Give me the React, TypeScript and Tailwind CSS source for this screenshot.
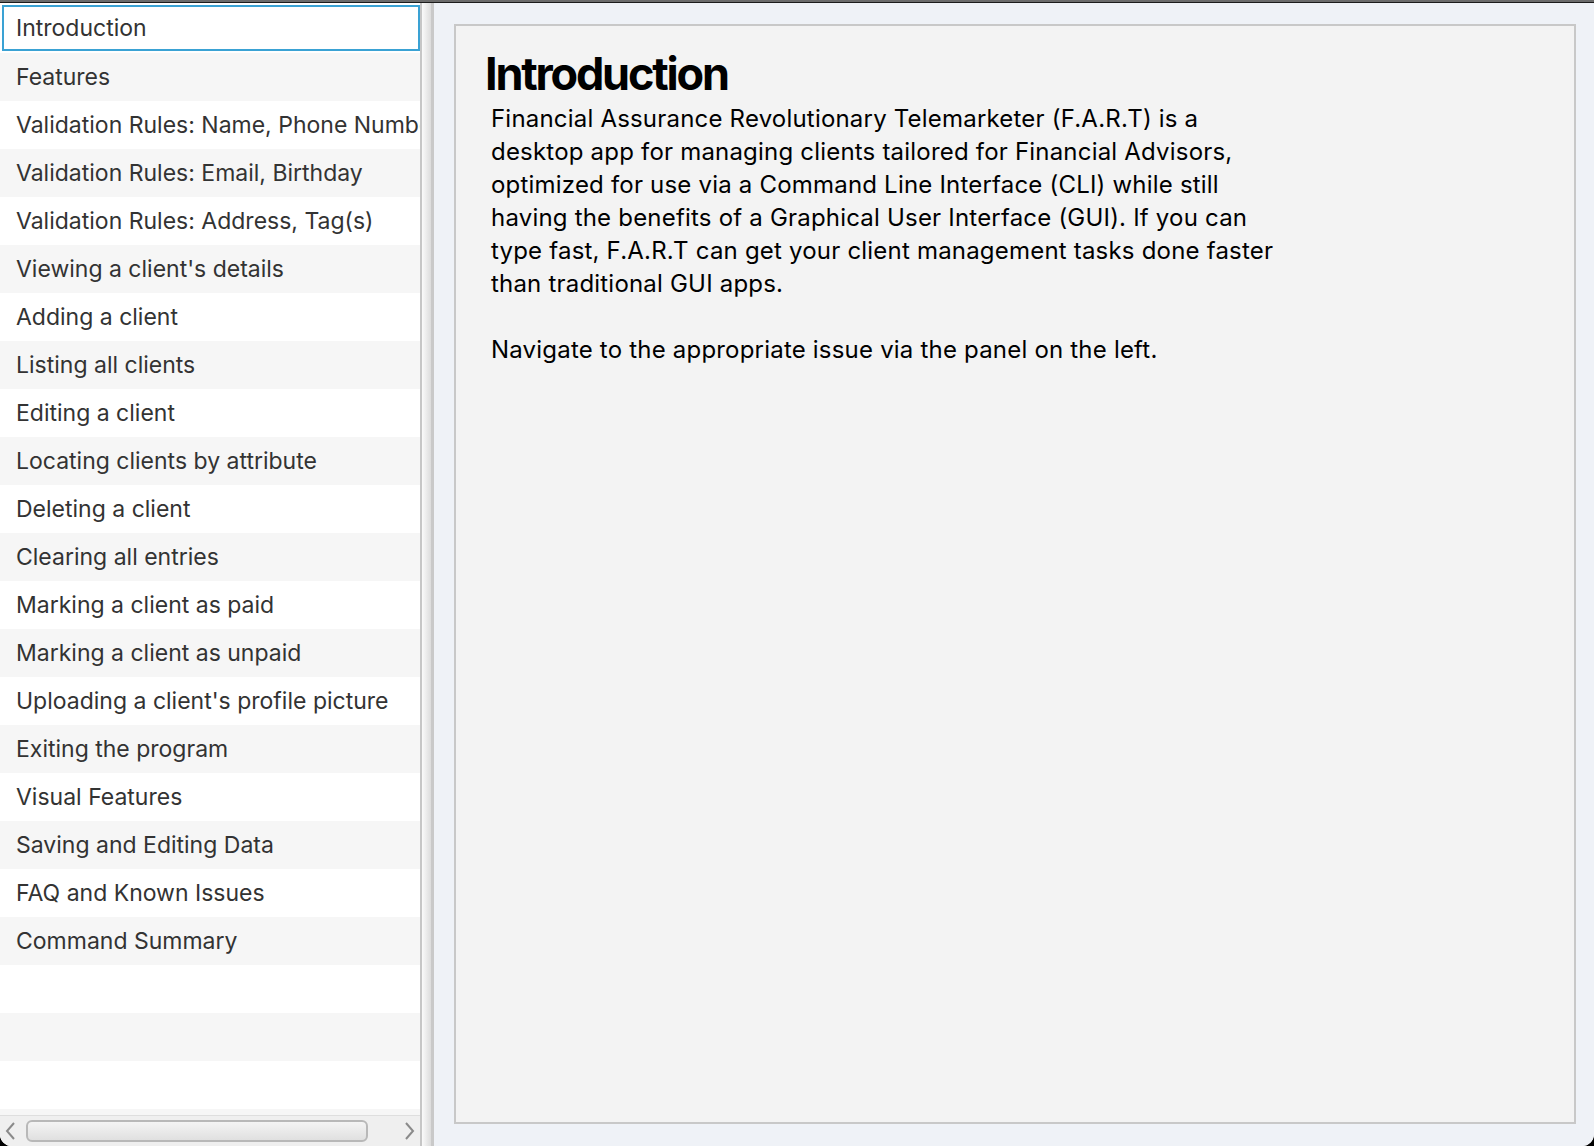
import React from 'react'

const topics = [
  "Introduction",
  "Features",
  "Validation Rules: Name, Phone Number",
  "Validation Rules: Email, Birthday",
  "Validation Rules: Address, Tag(s)",
  "Viewing a client's details",
  "Adding a client",
  "Listing all clients",
  "Editing a client",
  "Locating clients by attribute",
  "Deleting a client",
  "Clearing all entries",
  "Marking a client as paid",
  "Marking a client as unpaid",
  "Uploading a client's profile picture",
  "Exiting the program",
  "Visual Features",
  "Saving and Editing Data",
  "FAQ and Known Issues",
  "Command Summary",
  "",
  "",
  "",
  "",
]

const intro = [
  "Financial Assurance Revolutionary Telemarketer (F.A.R.T) is a",
  "desktop app for managing clients tailored for Financial Advisors,",
  "optimized for use via a Command Line Interface (CLI) while still",
  "having the benefits of a Graphical User Interface (GUI). If you can",
  "type fast, F.A.R.T can get your client management tasks done faster",
  "than traditional GUI apps.",
]

const App = () => {
  return (
    <div className="w-[1594px] h-[1146px] bg-black flex flex-col overflow-hidden" style={{ fontFamily: 'Inter, "Noto Sans", sans-serif' }}>
      <div className="h-[2px] bg-[#6b6b6b]" />
      <div className="h-[1px] bg-[#1c1c1c]" />
      <div className="flex-1 flex min-h-0 bg-white rounded-b-[12px] overflow-hidden">
        {/* left help list */}
        <div className="w-[420px] flex flex-col bg-white">
          <div className="flex-1 min-h-0 overflow-hidden">
            {topics.map((t, i) => (
              <div key={i} className={`h-[48px] ${i % 2 === 1 ? 'bg-[#f6f6f6]' : 'bg-white'}`}>
                {i === 0 ? (
                  <div className="h-[46px] mt-[2px] ml-[2px] border-2 border-[#3aa2d4] flex items-center pl-[12px] text-[23px] text-[#333] whitespace-nowrap overflow-hidden">
                    {t}
                  </div>
                ) : (
                  <div className="h-full flex items-center pl-[16px] text-[23px] text-[#333] whitespace-nowrap overflow-hidden">
                    {t}
                  </div>
                )}
              </div>
            ))}
          </div>
          {/* horizontal scrollbar */}
          <div className="h-[31px] border-t border-[#dedede] bg-[#efefef] flex items-center relative">
            <svg width="14" height="20" viewBox="0 0 14 20" className="ml-[3px]">
              <polyline points="11,2 4,10 11,18" fill="none" stroke="#8a8a8a" strokeWidth="2" />
            </svg>
            <div className="ml-[9px] w-[342px] h-[22px] rounded-[6px] border-2 border-[#b8b8b8] bg-gradient-to-b from-[#f4f4f4] to-[#e0e0e0]" />
            <div className="flex-1" />
            <svg width="14" height="20" viewBox="0 0 14 20" className="mr-[3px]">
              <polyline points="3,2 10,10 3,18" fill="none" stroke="#8a8a8a" strokeWidth="2" />
            </svg>
          </div>
        </div>
        {/* split divider */}
        <div className="w-[14px] flex">
          <div className="w-[2px] bg-[#c6c6c6]" />
          <div className="w-[9px] bg-gradient-to-r from-[#fafafa] to-[#dcdcdc]" />
          <div className="w-[3px] bg-[#c9c9c9]" />
        </div>
        {/* right content */}
        <div className="flex-1 bg-[#eff2f7] pt-[21px] pl-[20px] pr-[18px] pb-[22px] flex">
          <div className="flex-1 border-2 border-[#c8c8c8] bg-[#f3f3f3] pt-[25px] pl-[29px]">
            <h1 className="text-[45px] leading-[45px] font-bold tracking-[-2.2px] text-black">Introduction</h1>
            <div className="mt-[6px] pl-[6px] text-[24px] leading-[33px] text-black tracking-[0.2px]">
              {intro.map((l, i) => (
                <div key={i} className="whitespace-nowrap">{l}</div>
              ))}
              <div className="h-[33px]" />
              <div>Navigate to the appropriate issue via the panel on the left.</div>
            </div>
          </div>
        </div>
      </div>
    </div>
  )
}

export default App
